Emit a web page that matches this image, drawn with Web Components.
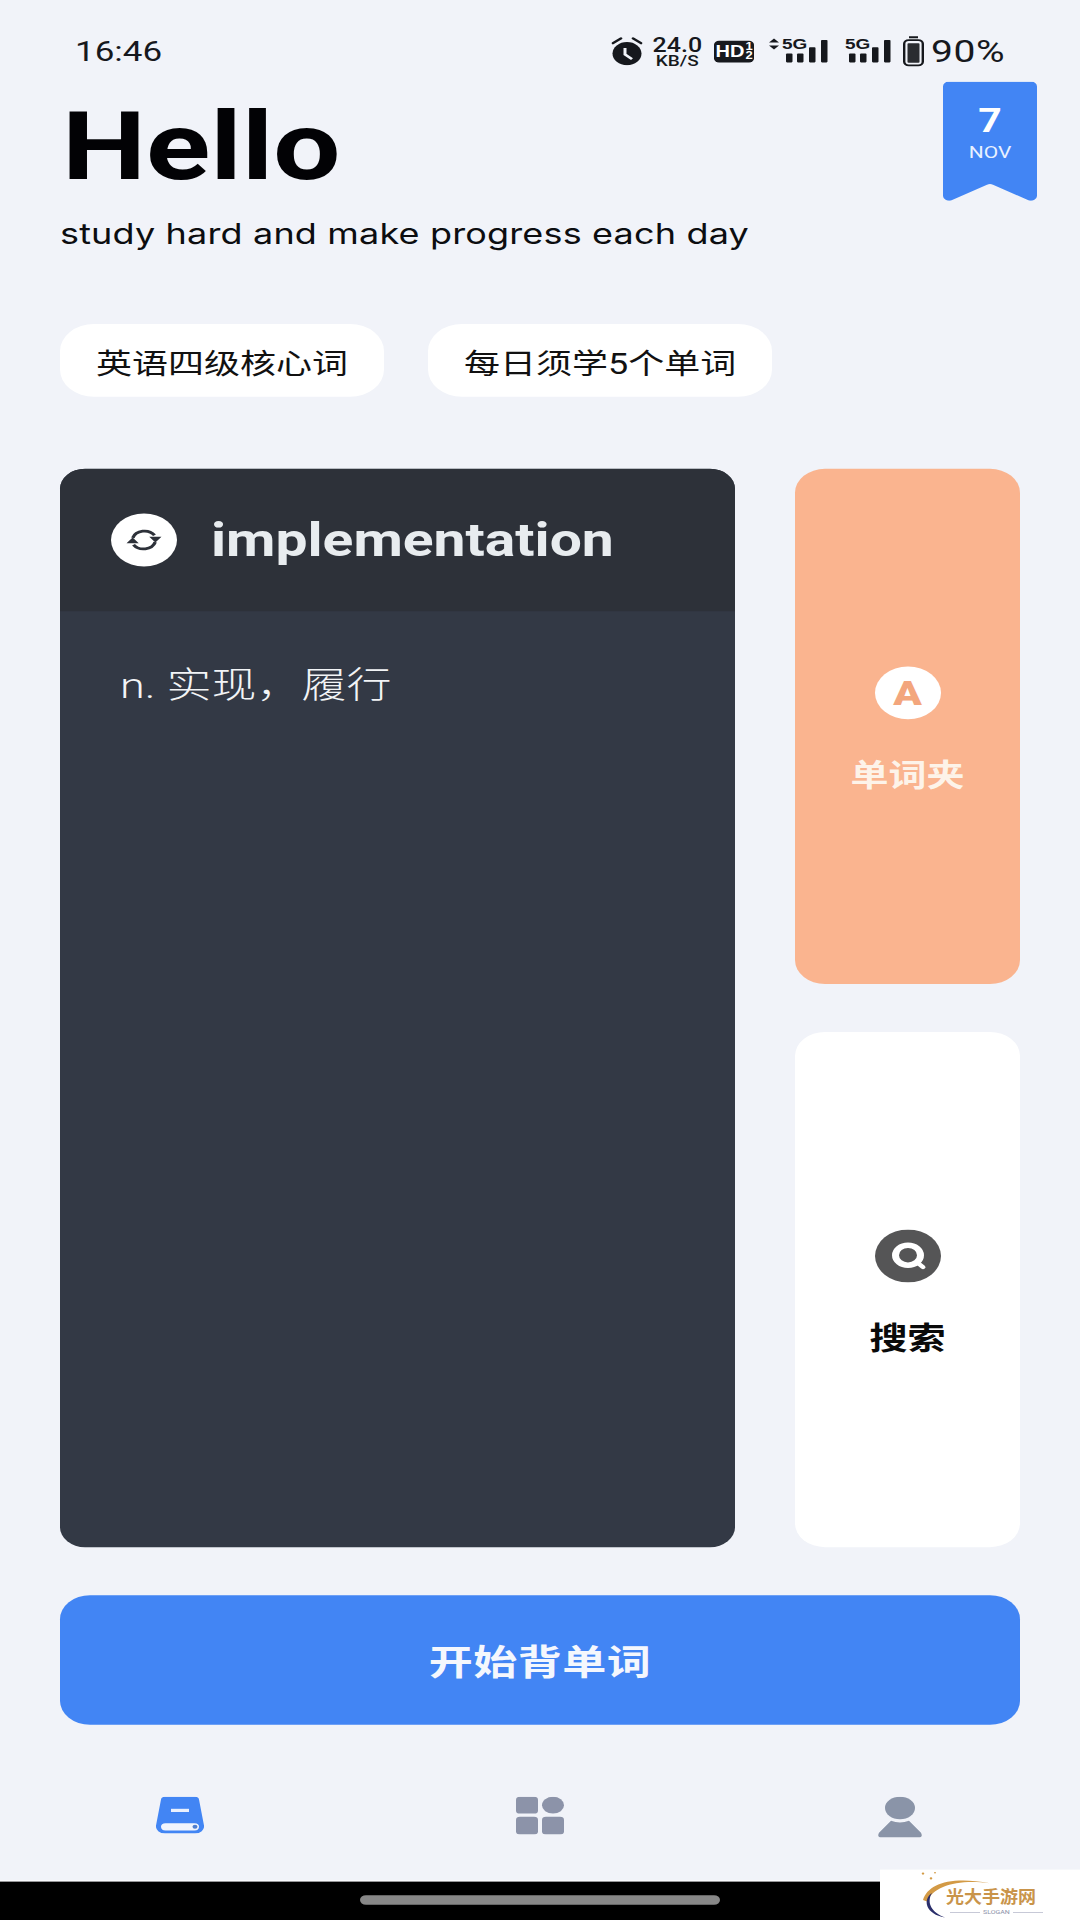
<!DOCTYPE html>
<html lang="zh">
<head>
<meta charset="utf-8">
<title>Hello</title>
<style>
  html, body { margin: 0; height: 1920px; overflow: hidden; background: #f1f3f9; }
</style>
</head>
<body>
<app-shell>
  <status-bar></status-bar>
  <hello-header></hello-header>
  <div slot="tags">
    <tag-pill>英语四级核心词</tag-pill>
    <tag-pill>每日须学5个单词</tag-pill>
  </div>
  <word-card slot="card" word="implementation">n. 实现，履行</word-card>
  <side-tile slot="side" kind="folder">单词夹</side-tile>
  <side-tile slot="side" kind="search">搜索</side-tile>
  <start-button slot="start">开始背单词</start-button>
  <tab-bar slot="tabs"></tab-bar>
  <home-bar slot="home"></home-bar>
  <water-mark slot="mark"></water-mark>
</app-shell>

<script>
class AppShell extends HTMLElement {
  constructor() {
    super()
    this.attachShadow({ mode: 'open' })
    // the screenshot is a 1080x2400 phone capture squeezed to 1920 tall
    this.shadowRoot.innerHTML = `
      <style>
        :host {
          display: flex;
          flex-direction: column;
          position: relative;
          width: 1080px;
          height: 2400px;
          margin-bottom: -480px;
          transform: scaleY(0.8);
          transform-origin: top left;
          background: #f1f3f9;
          color: #000;
          font-family: Roboto, "Noto Sans CJK SC", sans-serif;
        }
        .tags { padding: 0 60px; }
        ::slotted([slot="tags"]) { display: flex; gap: 44px; }
        .main {
          display: grid;
          grid-template-columns: 675px 225px;
          column-gap: 60px;
          height: 1348px;
          margin-top: 90px;
          padding: 0 60px;
        }
        .side { display: flex; flex-direction: column; gap: 60px; }
        .start { padding: 60px 60px 0; }
        .tabs { flex: 1; }
      </style>
      <slot></slot>
      <div class="tags"><slot name="tags"></slot></div>
      <div class="main">
        <slot name="card"></slot>
        <div class="side"><slot name="side"></slot></div>
      </div>
      <div class="start"><slot name="start"></slot></div>
      <div class="tabs"><slot name="tabs"></slot></div>
      <slot name="home"></slot>
      <slot name="mark"></slot>
    `
  }
}

class StatusBar extends HTMLElement {
  constructor() {
    super()
    this.attachShadow({ mode: 'open' })
    const bars = `
      <rect x="17" y="19" width="6.500" height="11" rx="1"/>
      <rect x="28" y="19" width="6.500" height="11" rx="1"/>
      <rect x="40" y="11" width="6.500" height="19" rx="1"/>
      <rect x="52" y="2" width="6.500" height="28" rx="1"/>`
    this.shadowRoot.innerHTML = `
      <style>
        :host {
          display: flex;
          justify-content: space-between;
          align-items: center;
          box-sizing: border-box;
          height: 102px;
          padding: 26px 75px 0 75px;
          color: #16181d;
        }
        .time { font-size: 35px; }
        .right { display: flex; align-items: center; }
        svg { display: block; }
        .speed { display: flex; flex-direction: column; align-items: center; margin: 0 12px 0 10px; font-weight: 500; }
        .speed b { font-weight: 500; font-size: 25px; line-height: 21px; }
        .speed i { margin-top: 2px; font-style: normal; font-size: 19px; line-height: 14px; }
        .hd {
          display: flex;
          align-items: center;
          justify-content: center;
          gap: 1px;
          box-sizing: border-box;
          width: 40px;
          height: 27px;
          border-radius: 5px;
          background: #17191e;
          color: #fff;
          font: 700 20px/1 "Liberation Sans", sans-serif;
        }
        .hd span { display: flex; flex-direction: column; font-size: 13px; line-height: 11px; }
        .hd em { font-style: normal; }
        .sig1 { margin: 0 17px 0 15px; }
        .batt { margin: 0 7px 0 12px; }
        .pct { font-size: 39px; letter-spacing: 0.5px; }
        text { font: 700 19px "Liberation Sans", sans-serif; fill: #16181d; }
      </style>
      <div class="time">16:46</div>
      <div class="right">
        <svg width="32" height="36" viewBox="0 0 32 36">
          <circle cx="16" cy="21" r="14.500" fill="#16181d"/>
          <path d="M14 14v8l7 6" fill="none" stroke="#f1f3f9" stroke-width="3"/>
          <path d="M2 8l8-6M30 8l-8-6" stroke="#16181d" stroke-width="2.800" stroke-linecap="round"/>
        </svg>
        <div class="speed"><b>24.0</b><i>KB/S</i></div>
        <div class="hd">HD<span><em>1</em><em>2</em></span></div>
        <svg class="sig1" width="59" height="44" viewBox="0 -6 59 44" fill="#16181d">
          <path d="M5 0l5 5H0zM5 14l5-5H0z"/>
          <text x="13" y="13">5G</text>
          ${bars}
        </svg>
        <svg width="46" height="44" viewBox="13 -6 46 44" fill="#16181d">
          <text x="13" y="13">5G</text>
          ${bars}
        </svg>
        <svg class="batt" width="21" height="38" viewBox="0 0 21 38">
          <path d="M6 1.500h9" stroke="#16181d" stroke-width="2.500"/>
          <rect x="1.200" y="5.200" width="18.600" height="31.600" rx="4.500" fill="none" stroke="#16181d" stroke-width="2.400"/>
          <rect x="4.500" y="9" width="12" height="24.500" rx="1" fill="#2a2c30"/>
        </svg>
        <div class="pct">90%</div>
      </div>
    `
  }
}

class HelloHeader extends HTMLElement {
  constructor() {
    super()
    this.attachShadow({ mode: 'open' })
    this.shadowRoot.innerHTML = `
      <style>
        :host {
          display: flex;
          justify-content: space-between;
          align-items: flex-start;
          height: 303px;
          padding-left: 60px;
          padding-right: 43px;
        }
        h1 { margin: 22px 0 0 2px; font-size: 119px; line-height: 120px; font-weight: 700; color: #020205; }
        p { margin: 30px 0 0; font-family: Inter, sans-serif; font-size: 36px; line-height: 36px; letter-spacing: 0.16px; color: #0c0d10; white-space: nowrap; }
      </style>
      <div>
        <h1>Hello</h1>
        <p>study hard and make progress each day</p>
      </div>
      <date-ribbon></date-ribbon>
    `
  }
}

class DateRibbon extends HTMLElement {
  constructor() {
    super()
    this.attachShadow({ mode: 'open' })
    this.shadowRoot.innerHTML = `
      <style>
        :host {
          display: flex;
          flex-direction: column;
          align-items: center;
          box-sizing: border-box;
          width: 94px;
          height: 149px;
          padding-top: 26px;
          background: #4285f4;
          color: #fff;
          clip-path: path('M6 0H88a6 6 0 0 1 6 6V143a6 6 0 0 1-8 5.500L50 129a6 6 0 0 0-6 0L8 148.500a6 6 0 0 1-8-5.500V6a6 6 0 0 1 6-6Z');
        }
        .day { font-size: 41px; line-height: 47px; font-weight: 700; }
        .month { margin-top: 4px; font-size: 21px; line-height: 24px; color: #e9f1ff; }
      </style>
      <div class="day">7</div>
      <div class="month">NOV</div>
    `
  }
}

class TagPill extends HTMLElement {
  constructor() {
    super()
    this.attachShadow({ mode: 'open' })
    this.shadowRoot.innerHTML = `
      <style>
        :host {
          display: flex;
          align-items: center;
          height: 91px;
          padding: 0 36px;
          border-radius: 34px;
          background: #fff;
          font-size: 36px;
          color: #111;
        }
      </style>
      <slot></slot>
    `
  }
}

class WordCard extends HTMLElement {
  constructor() {
    super()
    this.attachShadow({ mode: 'open' })
  }

  connectedCallback() {
    this.shadowRoot.innerHTML = `
      <style>
        :host {
          display: block;
          border-radius: 25px;
          background: #333945;
          overflow: hidden;
          color: #f2f4f6;
        }
        .head {
          display: flex;
          align-items: center;
          gap: 34px;
          height: 178px;
          padding-left: 51px;
          background: #2d3139;
        }
        .dot {
          display: flex;
          align-items: center;
          justify-content: center;
          width: 66px;
          height: 66px;
          border-radius: 50%;
          background: #fff;
        }
        .word { font-size: 57px; font-weight: 700; color: #e8ecef; }
        .body { padding: 70px 60px; font-size: 45px; line-height: 48px; font-weight: 300; }
      </style>
      <div class="head">
        <div class="dot">
          <svg width="42" height="42" viewBox="0 0 24 24">
            <path d="M5.600 10.500A7 7 0 0 1 18 8.600M18.400 13.500A7 7 0 0 1 6 15.400" fill="none" stroke="#2d3139" stroke-width="2"/>
            <path d="M15 9.600h7l-3.500 4.200zM2 14.400h7l-3.500-4.200z" fill="#2d3139"/>
          </svg>
        </div>
        <div class="word">${this.getAttribute('word')}</div>
      </div>
      <div class="body"><slot></slot></div>
    `
  }
}

class SideTile extends HTMLElement {
  constructor() {
    super()
    this.attachShadow({ mode: 'open' })
  }

  get icon() {
    if (this.getAttribute('kind') === 'folder') {
      return '<div class="dot">A</div>'
    }
    return `
      <svg width="66" height="66" viewBox="0 0 66 66">
        <circle cx="33" cy="33" r="33" fill="#555556"/>
        <circle cx="33" cy="32" r="12.500" fill="none" stroke="#fff" stroke-width="7"/>
        <path d="M43 42l5 5" stroke="#fff" stroke-width="5" stroke-linecap="round"/>
      </svg>
    `
  }

  connectedCallback() {
    const folder = this.getAttribute('kind') === 'folder'
    this.shadowRoot.innerHTML = `
      <style>
        :host {
          display: flex;
          flex: 1;
          flex-direction: column;
          align-items: center;
          justify-content: center;
          gap: 50px;
          padding-top: 6px;
          border-radius: 30px;
          background: ${folder ? '#fab48f' : '#fff'};
          color: ${folder ? '#fdf3e9' : '#0a0a0a'};
        }
        .dot {
          display: flex;
          align-items: center;
          justify-content: center;
          width: 66px;
          height: 66px;
          border-radius: 50%;
          background: #fff;
          color: #f3a67d;
          font-size: 42px;
          font-weight: 900;
        }
        svg { display: block; }
        .label { font-size: 38px; line-height: 40px; font-weight: 700; }
      </style>
      ${this.icon}
      <div class="label"><slot></slot></div>
    `
  }
}

class StartButton extends HTMLElement {
  constructor() {
    super()
    this.attachShadow({ mode: 'open' })
    this.shadowRoot.innerHTML = `
      <style>
        :host {
          display: flex;
          align-items: center;
          justify-content: center;
          height: 162px;
          border-radius: 30px;
          background: #4285f4;
          color: #f4f7fd;
          font-size: 44px;
          font-weight: 700;
          letter-spacing: 0.5px;
        }
      </style>
      <slot></slot>
    `
  }
}

class TabBar extends HTMLElement {
  constructor() {
    super()
    this.attachShadow({ mode: 'open' })
    this.shadowRoot.innerHTML = `
      <style>
        :host {
          display: grid;
          grid-template-columns: repeat(3, 1fr);
          justify-items: center;
          padding-top: 90px;
        }
        svg { display: block; }
      </style>
      <svg width="48" height="46" viewBox="0 0 48 46">
        <path d="M9 0H39a4 4 0 0 1 4 3.500L48 36a9 9 0 0 1-9 10H9a9 9 0 0 1-9-10L5 3.500A4 4 0 0 1 9 0Z" fill="#4285f4"/>
        <rect x="15" y="15" width="18" height="4" fill="#eaf1fe"/>
        <rect x="5" y="33" width="38" height="9" rx="4.500" fill="#f1f5fd"/>
        <circle cx="39" cy="37.500" r="2.500" fill="#4f7fd0"/>
      </svg>
      <svg width="48" height="47" viewBox="0 0 48 47" fill="#8c93a9">
        <rect x="0" y="0" width="22" height="21" rx="4"/>
        <ellipse cx="37" cy="10.500" rx="11" ry="10.500"/>
        <rect x="0" y="25" width="22" height="22" rx="4"/>
        <rect x="26" y="25" width="22" height="22" rx="4"/>
      </svg>
      <svg width="44" height="51" viewBox="0 0 44 51" fill="#8a94a8">
        <ellipse cx="22" cy="14" rx="15" ry="14"/>
        <path d="M13 30Q22 34 31 30L43 45Q45.500 51 40 51H4Q-1.500 51 1 45Z"/>
      </svg>
    `
  }
}

class HomeBar extends HTMLElement {
  constructor() {
    super()
    this.attachShadow({ mode: 'open' })
    this.shadowRoot.innerHTML = `
      <style>
        :host {
          display: flex;
          justify-content: center;
          box-sizing: border-box;
          height: 50px;
          padding-top: 17px;
          border-top: 2px solid #fafbfd;
          background: #000;
        }
        div { width: 360px; height: 12px; border-radius: 6px; background: #888; }
      </style>
      <div></div>
    `
  }
}

class WaterMark extends HTMLElement {
  constructor() {
    super()
    this.attachShadow({ mode: 'open' })
    this.shadowRoot.innerHTML = `
      <style>
        :host {
          position: absolute;
          right: 0;
          bottom: 0;
          display: block;
          width: 200px;
          height: 63px;
          background: #fff;
        }
        svg { position: absolute; left: 40px; top: 0; }
        .name {
          position: absolute;
          left: 66px;
          top: 22px;
          font-size: 18px;
          line-height: 24px;
          font-weight: 700;
          color: #c9944a;
          white-space: nowrap;
          transform: scaleY(1.2);
        }
        .slogan {
          position: absolute;
          left: 70px;
          top: 48px;
          display: flex;
          align-items: center;
          gap: 3px;
          font-size: 7px;
          line-height: 10px;
          color: #8b8fa8;
        }
        .slogan i { width: 30px; height: 1px; background: #b9bccd; }
      </style>
      <svg width="80" height="63" viewBox="0 0 80 63">
        <path d="M3 38C8 18 30 8 70 17C38 12 14 20 7 40Z" fill="#d39a45"/>
        <path d="M12 29C2 38 6 56 25 60C12 54 6 42 12 29Z" fill="#2b2f6b"/>
        <circle cx="3" cy="5" r="1.300" fill="#d39a45"/>
        <circle cx="15" cy="4" r="1" fill="#d39a45"/>
        <circle cx="11" cy="11" r="1.300" fill="#d39a45"/>
      </svg>
      <div class="name">光大手游网</div>
      <div class="slogan"><i></i>SLOGAN<i></i></div>
    `
  }
}

customElements.define('app-shell', AppShell)
customElements.define('status-bar', StatusBar)
customElements.define('hello-header', HelloHeader)
customElements.define('date-ribbon', DateRibbon)
customElements.define('tag-pill', TagPill)
customElements.define('word-card', WordCard)
customElements.define('side-tile', SideTile)
customElements.define('start-button', StartButton)
customElements.define('tab-bar', TabBar)
customElements.define('home-bar', HomeBar)
customElements.define('water-mark', WaterMark)
</script>
</body>
</html>
